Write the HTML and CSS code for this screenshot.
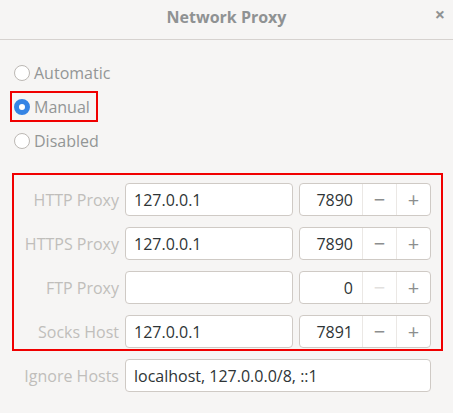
FILE: index.html
```html
<!DOCTYPE html>
<html>
<head>
<meta charset="utf-8">
<link rel="stylesheet" href="styles.css">
</head>
<body>
<div class="dialog">
  <header class="titlebar">
    <div class="title">Network Proxy</div>
    <div class="close">×</div>
  </header>
  <div class="content">
    <div class="radios">
      <div class="radio-row"><span class="radio"></span><span class="radio-label">Automatic</span></div>
      <div class="radio-row marked"><span class="radio checked"></span><span class="radio-label">Manual</span></div>
      <div class="radio-row"><span class="radio"></span><span class="radio-label">Disabled</span></div>
    </div>
    <div class="proxy-box">
      <div class="row">
        <div class="label">HTTP Proxy</div>
        <div class="entry">127.0.0.1</div>
        <div class="spin"><div class="spin-value">7890</div><div class="spin-btn">−</div><div class="spin-btn">+</div></div>
      </div>
      <div class="row">
        <div class="label">HTTPS Proxy</div>
        <div class="entry">127.0.0.1</div>
        <div class="spin"><div class="spin-value">7890</div><div class="spin-btn">−</div><div class="spin-btn">+</div></div>
      </div>
      <div class="row">
        <div class="label">FTP Proxy</div>
        <div class="entry"></div>
        <div class="spin"><div class="spin-value">0</div><div class="spin-btn disabled">−</div><div class="spin-btn">+</div></div>
      </div>
      <div class="row">
        <div class="label">Socks Host</div>
        <div class="entry">127.0.0.1</div>
        <div class="spin"><div class="spin-value">7891</div><div class="spin-btn">−</div><div class="spin-btn">+</div></div>
      </div>
    </div>
    <div class="row ignore">
      <div class="label">Ignore Hosts</div>
      <div class="entry wide">localhost, 127.0.0.0/8, ::1</div>
    </div>
  </div>
</div>
</body>
</html>
```
FILE: styles.css
```css
html, body {
  margin: 0;
  padding: 0;
  background: #f6f5f4;
  font-family: "Open Sans", "Noto Sans", sans-serif;
}
.dialog {
  width: 453px;
  height: 413px;
  background: #f6f5f4;
}
.titlebar {
  position: relative;
  height: 39px;
  border-bottom: 1px solid #d6d2cf;
  display: flex;
  align-items: center;
  justify-content: center;
}
.title {
  font-weight: bold;
  font-size: 16px;
  color: #8f9293;
  margin-top: -6px;
}
.close {
  position: absolute;
  right: 8px;
  top: 2px;
  font-size: 18px;
  color: #8f9293;
  font-weight: bold;
}
.content {
  padding: 17px 0 0 10px;
}
.radios {
  display: flex;
  flex-direction: column;
  gap: 3px;
  align-items: flex-start;
}
.radio-row {
  display: flex;
  align-items: center;
  gap: 4px;
  height: 27px;
  padding: 0 6px 0 2px;
  border: 2px solid transparent;
}
.radio-row.marked {
  border-color: #f00000;
}
.radio {
  width: 14px;
  height: 14px;
  border: 1px solid #bcb8b4;
  border-radius: 50%;
  background: #ffffff;
  box-sizing: content-box;
}
.radio.checked {
  width: 6px;
  height: 6px;
  border: 5px solid #3584e4;
  background: #ffffff;
}
.radio-label {
  font-size: 16px;
  color: #939696;
}
.proxy-box {
  margin: 17px 0 0 2px;
  width: 421px;
  border: 2px solid #f00000;
  padding: 8px 6px 1px 0;
  display: flex;
  flex-direction: column;
  gap: 11px;
}
.row {
  display: flex;
  align-items: center;
  gap: 6px;
  height: 33px;
}
.label {
  width: 105px;
  text-align: right;
  font-size: 16px;
  color: #c0bebb;
}
.entry {
  box-sizing: border-box;
  width: 168px;
  height: 33px;
  border: 1px solid #cfcac5;
  border-radius: 4px;
  background: #ffffff;
  font-size: 16px;
  color: #2e3436;
  padding: 0 8px;
  display: flex;
  align-items: center;
}
.entry.wide {
  width: 306px;
}
.spin {
  box-sizing: border-box;
  width: 132px;
  height: 33px;
  border: 1px solid #cfcac5;
  border-radius: 4px;
  background: #ffffff;
  display: flex;
}
.spin-value {
  width: 62px;
  box-sizing: border-box;
  padding-right: 9px;
  text-align: right;
  font-size: 16px;
  color: #2e3436;
  display: flex;
  align-items: center;
  justify-content: flex-end;
}
.spin-btn {
  flex: 1;
  border-left: 1px solid #ebe8e5;
  display: flex;
  align-items: center;
  justify-content: center;
  font-size: 20px;
  color: #8c8e8e;
}
.spin-btn.disabled {
  color: #e2e0de;
}
.ignore {
  margin: 8px 0 0 4px;
}
```
